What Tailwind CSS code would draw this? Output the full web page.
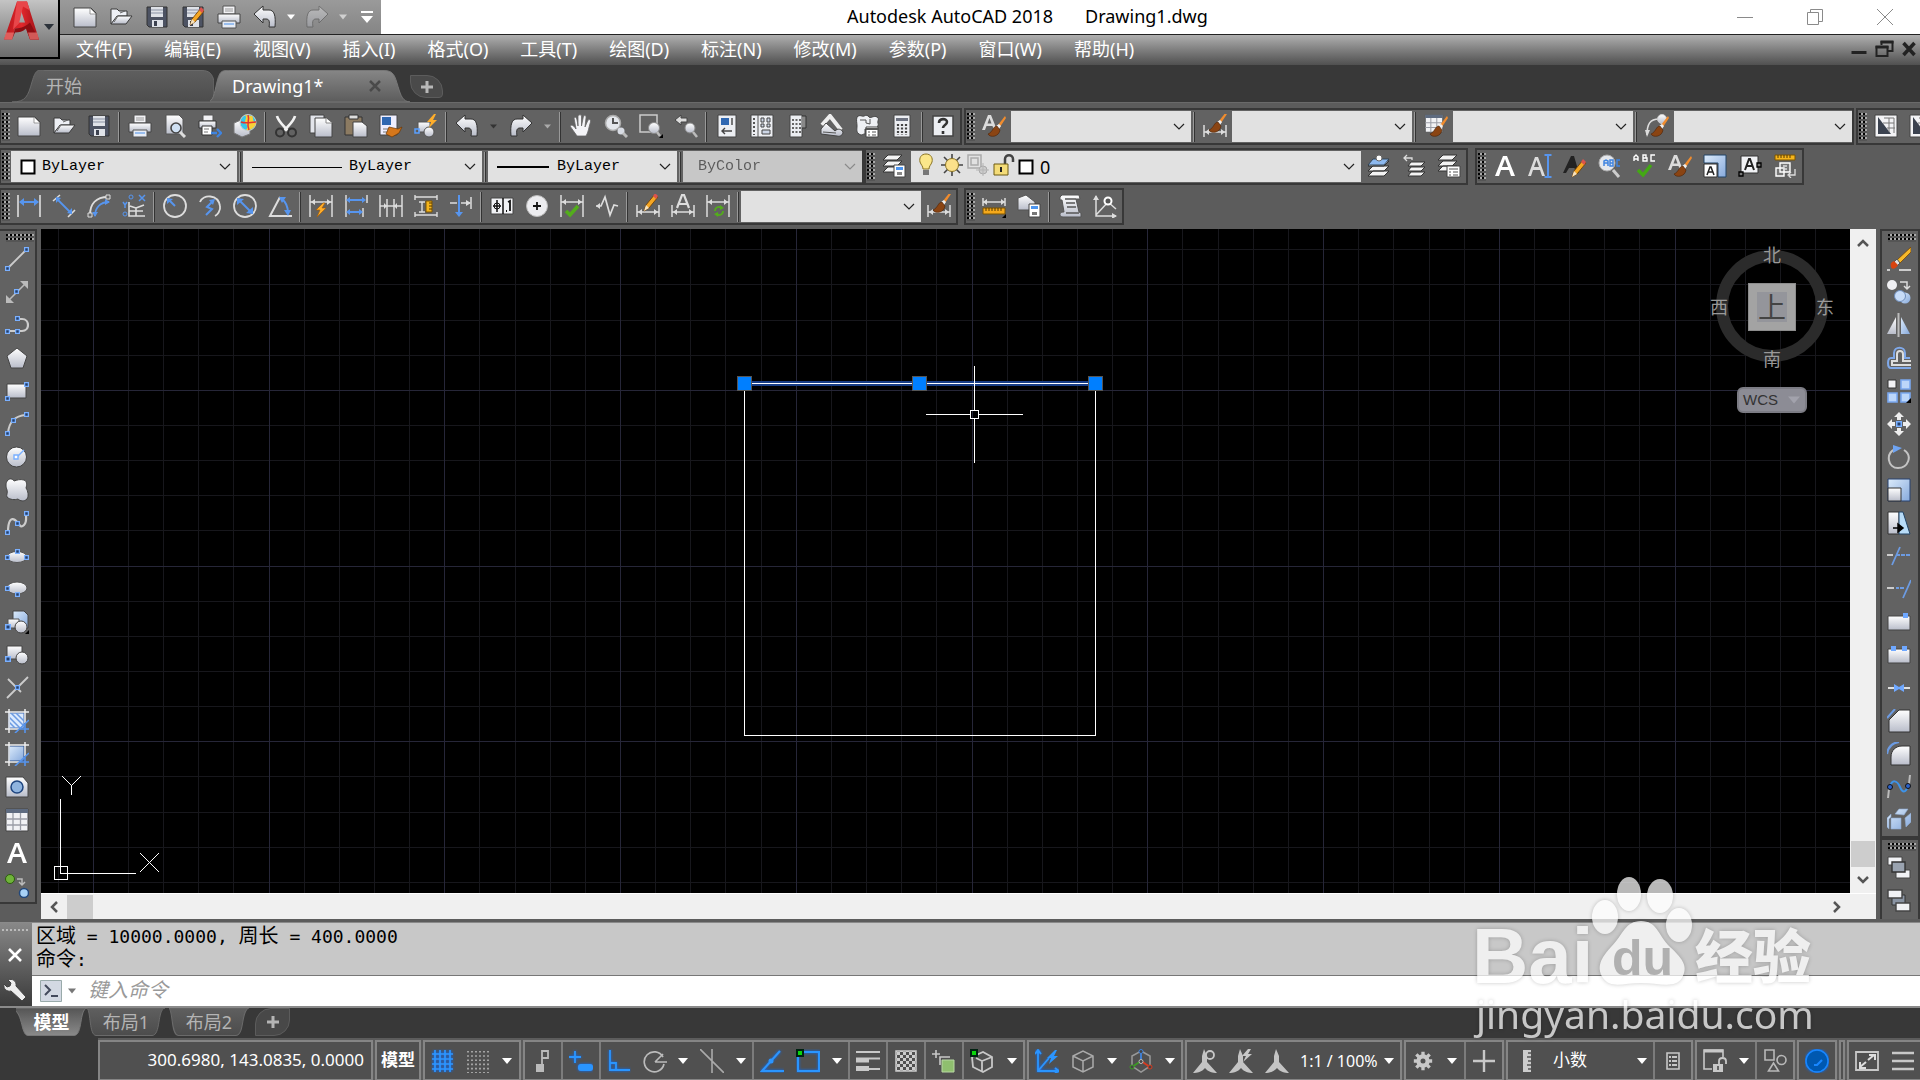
<!DOCTYPE html>
<html lang="zh-CN">
<head>
<meta charset="utf-8">
<title>Autodesk AutoCAD 2018 - Drawing1.dwg</title>
<script src="https://cdn.jsdelivr.net/npm/@tailwindcss/browser@4"></script>
</head>
<body class="relative flex h-screen min-h-[720px] flex-col overflow-hidden bg-[#5c5c5c] font-['Noto_Sans','Noto_Sans_CJK_SC',sans-serif] text-lg text-white">

<!-- Icon library, 24 x 24 -->
<svg class="absolute size-0" aria-hidden="true">
<defs>
<linearGradient id="g" x1="0" y1="0" x2="0" y2="1"><stop offset="0" stop-color="#fff"/><stop offset="1" stop-color="#b9bdca"/></linearGradient>
<linearGradient id="b" x1="0" y1="0" x2="1" y2="1"><stop offset="0" stop-color="#dcebfb"/><stop offset="1" stop-color="#86a9dc"/></linearGradient>
<linearGradient id="r" x1="0" y1="0" x2="1" y2="0"><stop offset="0" stop-color="#b3151b"/><stop offset=".5" stop-color="#e2272c"/><stop offset="1" stop-color="#9c1015"/></linearGradient>
<linearGradient id="t" x1="0" y1="0" x2="0" y2="1"><stop offset="0" stop-color="#5f5f5f"/><stop offset="1" stop-color="#4c4c4c"/></linearGradient>
<linearGradient id="ta" x1="0" y1="0" x2="0" y2="1"><stop offset="0" stop-color="#868686"/><stop offset="1" stop-color="#5c5c5c"/></linearGradient>
<linearGradient id="tb" x1="0" y1="0" x2="0" y2="1"><stop offset="0" stop-color="#555"/><stop offset="1" stop-color="#8a8a8a"/></linearGradient>
<pattern id="dots" width="4" height="4" patternUnits="userSpaceOnUse"><rect width="4" height="4" fill="#555"/><rect width="2" height="2" fill="#000"/><rect x="2" y="0" width="2" height="2" fill="#aaa"/></pattern>
<filter id="glow" x="-40%" y="-40%" width="180%" height="180%"><feDropShadow dx="0" dy="0" stdDeviation="1.4" flood-color="#0a6cff"/></filter>
</defs>
<symbol id="new" viewBox="0 0 24 24"><path d="M1 3h17l5 5v14H1z" fill="url(#g)" stroke="#444"/><path d="M17 3v6h6z" fill="#fff" stroke="#777" stroke-width=".7"/></symbol>
<symbol id="open" viewBox="0 0 24 24"><path d="M2 19V4h6l2 2h8v5H9z" fill="#eef0f5" stroke="#3b3b3b"/><path d="M2 19l6-8h15l-6 8z" fill="url(#g)" stroke="#3b3b3b"/><path d="M11 8l5-2M5 17l4-6" stroke="#666"/></symbol>
<symbol id="save" viewBox="0 0 24 24"><path d="M2 2h20v20H4l-2-2z" fill="#4d5363" stroke="#333"/><path d="M6 2h12v10H6z" fill="#dfe2e8"/><path d="M6 5h12M6 8h12" stroke="#8b93a5"/><path d="M7 15h11v7H7z" fill="#dfe2e8"/><path d="M9 16h3v5H9z" fill="#3d4250"/></symbol>
<symbol id="pencil" viewBox="0 0 24 24"><path d="M9 20l2-6L20 3l3 3-9 11z" fill="#f5a623" stroke="#6b3b00" stroke-width=".8"/><path d="M18 5l2-3 3 3-2 3z" fill="#d9534f"/><path d="M9 20l2-6 3 3z" fill="#f7e3c0"/></symbol>
<symbol id="saveas" viewBox="0 0 24 24"><use href="#save"/><use href="#pencil"/></symbol>
<symbol id="print" viewBox="0 0 24 24"><path d="M6 1h12v8H6z" fill="#f2f2f5" stroke="#555"/><path d="M8 4h8M8 6h8" stroke="#999"/><path d="M1 9h22v9H1z" fill="url(#g)" stroke="#444"/><path d="M5 16h14v7H5z" fill="#e7ecf5" stroke="#555"/><path d="M7 19h10" stroke="#4b8fe8"/></symbol>
<symbol id="preview" viewBox="0 0 24 24"><path d="M3 1h13l4 4v15H3z" fill="url(#g)" stroke="#555"/><circle cx="13" cy="14" r="5" fill="#cfe0f3" stroke="#444" stroke-width="1.6"/><path d="M17 18l5 5" stroke="#ddd" stroke-width="3"/></symbol>
<symbol id="publish" viewBox="0 0 24 24"><path d="M5 1h10v6H5z" fill="#f2f2f5" stroke="#555"/><path d="M1 7h17v7H1z" fill="url(#g)" stroke="#333"/><path d="M4 12h10v9H4z" fill="#fff" stroke="#333"/><path d="M6 15h5M6 18h4" stroke="#777"/><path d="M13 19h6m0-4l4 4-4 4" fill="none" stroke="#3f84e0" stroke-width="2.4"/></symbol>
<symbol id="p3d" viewBox="0 0 24 24"><path d="M1 9l7-3 9 3v11l-8 3-8-4z" fill="url(#g)" stroke="#777"/><circle cx="15" cy="8.500" r="8" fill="#35c7ea" stroke="#ccc"/><path d="M12 1c3 3-2 6 1 9s1 4 0 6c5 1 9-3 10-7-4-1-2-5-4-7z" fill="#f7d038"/><path d="M15 1c2 5-2 9 1 15M8 8c5 2 10 0 15 0" stroke="#e3342f" fill="none" stroke-width="1.500"/></symbol>
<symbol id="cut" viewBox="0 0 24 24"><path d="M3 2c1 5 6 9 11 15M21 2c-1 5-6 9-11 15" stroke="#f2f2f2" stroke-width="2.600" fill="none"/><circle cx="6" cy="18.500" r="4" fill="none" stroke="#333" stroke-width="2"/><circle cx="18" cy="18.500" r="4" fill="none" stroke="#333" stroke-width="2"/></symbol>
<symbol id="copy" viewBox="0 0 24 24"><path d="M1 1h14v18H1z" fill="#e2e4ea" stroke="#444"/><path d="M6 4h11l6 5v14H6z" fill="url(#g)" stroke="#444"/><path d="M17 4v5h6" fill="#fff" stroke="#888"/></symbol>
<symbol id="paste" viewBox="0 0 24 24"><path d="M1 3h17v18H1z" fill="#8c7b62" stroke="#333"/><path d="M5 1h9v4H5z" fill="#ddd" stroke="#333"/><path d="M9 8h9l5 4v11H9z" fill="url(#g)" stroke="#444"/></symbol>
<symbol id="brush" viewBox="0 0 24 24"><path d="M23 2l-7 9 2 2 6-9z" fill="#f08c2e"/><path d="M17 10l-3 2 3 3 2-3z" fill="#eee"/><path d="M15 12c-4 0-4 6-9 8 2 4 11 3 12-4z" fill="#8a4413" stroke="#4c2409" stroke-width=".6"/></symbol>
<symbol id="match" viewBox="0 0 24 24"><path d="M1 1h17v20H1z" fill="#eef" stroke="#444"/><path d="M3 3h9v8H3z" fill="#2f67b1"/><path d="M4 15h7M4 18h7" stroke="#777"/><path d="M10 13l9 2 4-2-3 6-7 4-6-3z" fill="#d5771c" stroke="#6b3500" stroke-width=".7"/></symbol>
<symbol id="block" viewBox="0 0 24 24"><path d="M4 8h12v10H4z" fill="url(#g)" stroke="#555"/><circle cx="15" cy="18" r="5" fill="url(#g)" stroke="#555"/><path d="M1 15h4v4H1z" fill="none" stroke="#5aa0ff" stroke-width="1.500"/><path d="M20 0l-7 8h4l-2 6 8-8h-4l3-6z" fill="#ffae2b"/></symbol>
<symbol id="undo" viewBox="0 0 24 24"><path d="M1 9l9-8v4h6c5 0 7 5 6 17h-6c1-6 0-8-3-8h-3v4z" fill="url(#g)" stroke="#333"/></symbol>
<symbol id="redo" viewBox="0 0 24 24"><path d="M23 9l-9-8v4H8c-5 0-7 5-6 17h6c-1-6 0-8 3-8h3v4z" fill="url(#g)" stroke="#333"/></symbol>
<symbol id="pan" viewBox="0 0 24 24"><path d="M8 22c-2-3-5-7-7-10 2-2 4 0 6 3L5 4c2-2 3 0 4 8V2c2-2 3-1 3.500 0v10l2-10c2-1 3 0 2.500 2l-1 9 3-7c2-1 3 0 2.500 2-2 6-2 10-4.500 14z" fill="#f4f4f7" stroke="#666" stroke-width=".8"/></symbol>
<symbol id="zoomt" viewBox="0 0 24 24"><circle cx="9" cy="9" r="7.500" fill="#e4e7ec" stroke="#aaa" stroke-width="1.500"/><path d="M9 4v5h5" stroke="#555" stroke-width="2" fill="none"/><circle cx="17" cy="17" r="3.500" fill="#d8dce4"/><path d="M19 19l4 4" stroke="#bbb" stroke-width="3"/></symbol>
<symbol id="zoomw" viewBox="0 0 24 24"><path d="M1 1h17v17H1z" fill="none" stroke="#ccc" stroke-width="1.500"/><circle cx="15" cy="14" r="5.500" fill="url(#g)" stroke="#888"/><path d="M18 18l3 4" stroke="#bbb" stroke-width="2.500"/><path d="M24 20v4h-4z" fill="#000"/></symbol>
<symbol id="zoomp" viewBox="0 0 24 24"><path d="M1 6l6-5v3h6v4H7v3z" fill="#ddd" stroke="#444"/><circle cx="16" cy="14" r="5" fill="url(#g)" stroke="#888"/><path d="M19 18l4 5" stroke="#bbb" stroke-width="2.500"/></symbol>
<symbol id="props" viewBox="0 0 24 24"><path d="M3 1h18v22H3z" fill="#eceef2" stroke="#444"/><path d="M6 4h8v7H6z" fill="#2f67b1"/><path d="M17 4v7M7 17h10M10 14l-3 3 3 3" stroke="#444" stroke-width="1.400" fill="none"/></symbol>
<symbol id="dc" viewBox="0 0 24 24"><path d="M1 1h22v22H1z" fill="#eceef2" stroke="#444"/><path d="M8 1v22" stroke="#555"/><path d="M4 4v17" stroke="#555" stroke-width="2" stroke-dasharray="2 2"/><path d="M11 4h3v4h-3zM17 4h3v4h-3zM11 10h3v3h-3zM17 10h3v3h-3zM12 16h8v4h-8z" fill="#cdd6e6" stroke="#444"/></symbol>
<symbol id="tp" viewBox="0 0 24 24"><path d="M5 1h12v22H5z" fill="#eceef2" stroke="#444"/><path d="M17 2h4v12h-4" fill="#888" stroke="#333"/><path d="M8 5v16M11.500 5v16M15 5v16" stroke="#666" stroke-width="2" stroke-dasharray="2 2"/></symbol>
<symbol id="ssm" viewBox="0 0 24 24"><path d="M2 11l8-9 11 14" fill="none" stroke="#eee" stroke-width="4"/><path d="M1 15l5-6 9 8c3-3 6-2 8 1 0 3-3 5-6 4L1 20z" fill="url(#g)" stroke="#444"/><path d="M3 18l13 1" stroke="#555"/></symbol>
<symbol id="markup" viewBox="0 0 24 24"><path d="M2 3c3-3 5 0 7-1s4-1 5 1 5-2 8 0 0 4 1 6-1 4-1 6H10v5c-3 0-3 2-6 0s-2-5-2-8-1-6 0-9z" fill="#eef0f4" stroke="#444"/><path d="M5 6h6v3l4 1v-5" stroke="#555" fill="none"/><path d="M11 13h12v10H11z" fill="#fff" stroke="#444"/><path d="M11 15h12" stroke="#555" stroke-width="2"/><path d="M13 18h2m2 0h4m-8 3h2m2 0h4" stroke="#555"/></symbol>
<symbol id="calc" viewBox="0 0 24 24"><path d="M4 1h16v22H4z" fill="#eceef2" stroke="#444"/><path d="M6 4h12v3H6z" fill="#6d7280"/><path d="M8 10v11M12 10v11M16 10v11" stroke="#444" stroke-width="2.200" stroke-dasharray="2 1.500"/></symbol>
<symbol id="help" viewBox="0 0 24 24"><path d="M2 2h20v20H2z" fill="#eceef2" stroke="#444" stroke-width="1.500"/><path d="M8 9c0-5 8-5 8-1 0 3-4 3-4 6M12 17v3" stroke="#333" stroke-width="2.600" fill="none"/></symbol>
<symbol id="A" viewBox="0 0 24 24"><path d="M2 22L10 2h4l8 20h-4l-2-6H8l-2 6zM9 13h6l-3-8z" fill="#fff"/></symbol>
<symbol id="As" viewBox="0 0 24 24"><path d="M0 16L6 1h3l6 15h-3l-1.500-4h-6L3 16zM5.500 9.500h4l-2-5.500z" fill="#dcdcdc"/></symbol>
<symbol id="tstyle" viewBox="0 0 24 24"><use href="#As"/><use href="#brush"/></symbol>
<symbol id="dim" viewBox="0 0 24 24"><path d="M1 1v22M23 1v22M1 8h22" stroke="#ddd" stroke-width="1.500" fill="none"/><path d="M2 8l4-3v6zM22 8l-4-3v6z" fill="#ddd"/></symbol>
<symbol id="dimlow" viewBox="0 0 24 24"><path d="M1 11v12M23 11v12M1 18h22" stroke="#ddd" stroke-width="1.500" fill="none"/><path d="M2 18l4-3v6zM22 18l-4-3v6z" fill="#ddd"/></symbol>
<symbol id="dstyle" viewBox="0 0 24 24"><use href="#dimlow"/><use href="#brush" y="-4"/></symbol>
<symbol id="table" viewBox="0 0 24 24"><path d="M1 1h22v22H1z" fill="#f1f2f5" stroke="#444"/><path d="M1 1h22v4H1z" fill="#5e6b80"/><path d="M1 11h22M1 17h22M8 5v18M15.500 5v18" stroke="#9a9da6" stroke-width="1.300"/></symbol>
<symbol id="tbstyle" viewBox="0 0 24 24"><svg width="20" height="19" viewBox="0 0 24 24"><use href="#table"/></svg><use href="#brush"/></symbol>
<symbol id="mlstyle" viewBox="0 0 24 24"><path d="M2 21C2 10 5 5 14 5" stroke="#ddd" stroke-width="1.600" fill="none"/><path d="M0 16l5 0-3 7z" fill="#ddd"/><circle cx="17" cy="5" r="4.500" fill="url(#g)" stroke="#ccc"/><use href="#brush"/></symbol>
<symbol id="vp" viewBox="0 0 24 24"><path d="M1 1h22v22H1z" fill="#f3f3f5" stroke="#444"/><path d="M4 3v17h13z" fill="#3b424f"/><path d="M10 4h10v15M15 4v14M9 9h11M13 14h8" stroke="#777" fill="none"/></symbol>
<symbol id="layers" viewBox="0 0 24 24"><path d="M6 7h16l-5 5H1zM6 12h16l-5 5H1zM6 17h16l-5 5H1z" fill="#f3f3f3" stroke="#333"/></symbol>
<symbol id="lprop" viewBox="0 0 24 24"><path d="M6 1h14l-5 5H1zM6 7h14l-5 5H1zM6 13h14l-5 5H1z" fill="#f3f3f3" stroke="#333"/><path d="M12 11h11v12H12z" fill="#fff" stroke="#444"/><path d="M14 13h7v3h-7z" fill="#4d96f0"/><path d="M15 18h5v3h-5z" fill="#888"/></symbol>
<symbol id="lcur" viewBox="0 0 24 24"><use href="#layers"/><path d="M6 5h16l-5 6H1z" fill="#8db9ef" stroke="#345"/><circle cx="12" cy="4" r="3" fill="#fff" stroke="#666"/></symbol>
<symbol id="lprev" viewBox="0 0 24 24"><path d="M9 8h14l-4 4H6zM9 13h14l-4 4H6zM9 18h14l-4 4H6z" fill="#f3f3f3" stroke="#333"/><path d="M10 6V4H2M5 1L2 4l3 3" stroke="#ddd" fill="none" stroke-width="1.300"/></symbol>
<symbol id="lstate" viewBox="0 0 24 24"><path d="M6 1h14l-5 5H1zM6 7h14l-5 5H1zM6 12h14l-5 5H1z" fill="#f3f3f3" stroke="#333"/><path d="M10 12h13v11H10z" fill="#fff" stroke="#444"/><path d="M12 15h9M12 18h2m2 0h5m-9 3h2m2 0h5" stroke="#555"/></symbol>
<symbol id="bulb" viewBox="0 0 24 24"><path d="M12 1c-5 0-7 4-6 8 1 3 3 4 3 7h6c0-3 2-4 3-7 1-4-1-8-6-8z" fill="#fbe78a" stroke="#8a7424"/><path d="M9 17h6v5H9z" fill="#777"/></symbol>
<symbol id="sun" viewBox="0 0 24 24"><path d="M12 1v22M1 12h22M4 4l16 16M20 4L4 20" stroke="#444" stroke-width="1.600"/><circle cx="12" cy="12" r="6.500" fill="#fbe08a" stroke="#8a7424"/></symbol>
<symbol id="frz" viewBox="0 0 24 24"><path d="M2 2h13v13H2zM5 5h7v7H5z" fill="none" stroke="#aaa" stroke-width="1.500"/><circle cx="17" cy="17" r="4" fill="#ccc" stroke="#aaa"/><path d="M17 10v13M10 17h13" stroke="#b5b5b5"/></symbol>
<symbol id="lock" viewBox="0 0 24 24"><path d="M13 11V6c0-5 8-5 8 0v3" stroke="#444" stroke-width="2.500" fill="none"/><path d="M2 11h14v11H2z" fill="#f4dc78" stroke="#6c5a13"/><path d="M9 14v5" stroke="#222" stroke-width="2"/></symbol>
<symbol id="txt1" viewBox="0 0 24 24"><path d="M0 22L7 3h3l7 19h-3l-2-6H5l-2 6zM6 13h5L8.500 6z" fill="#dcdcdc"/><path d="M20 2v20M16.500 1h7M16.500 23h7" stroke="#5795ee" stroke-width="2"/></symbol>
<symbol id="txt2" viewBox="0 0 24 24"><path d="M0 19L8 2h3l5 17h-3l-1.500-5H6l-3 5z" fill="#222"/><use href="#pencil" y="3"/></symbol>
<symbol id="find" viewBox="0 0 24 24"><circle cx="9" cy="9" r="8" fill="#e4e7ec" stroke="#aaa"/><path d="M15 16l6 7" stroke="#ccc" stroke-width="3"/><path d="M6 12V7l2-1 2 1v5m0-3H6m6-3v6h3V9h-3 3V6zm10 0h-3v6h3" stroke="#3f84e0" stroke-width="1.500" fill="none"/></symbol>
<symbol id="spell" viewBox="0 0 24 24"><path d="M1 7V3l2-2 2 2v4M1 5h4M10 1v6h4V4h-4 3V1zM22 1h-4v6h4" stroke="#fff" stroke-width="1.400" fill="none"/><path d="M5 16l5 5 8-10" stroke="#43a814" stroke-width="3.500" fill="none"/></symbol>
<symbol id="tscale" viewBox="0 0 24 24"><path d="M1 1h22v22h-8V9H1z" fill="url(#b)" stroke="#246"/><path d="M1 10h13v13H1z" fill="#fff" stroke="#333"/><path d="M4 21l3-8h1l3 8M5 18h5" stroke="#222" stroke-width="1.500" fill="none"/></symbol>
<symbol id="tjust" viewBox="0 0 24 24"><path d="M3 2h17v17H3z" fill="#f0f1f4" stroke="#333"/><path d="M7 16l4-11h1l4 11M8 12h7" stroke="#222" stroke-width="2" fill="none"/><path d="M1 18h4v4H1zM19 9h4v4h-4z" fill="#777" stroke="#000" stroke-width="1.300"/></symbol>
<symbol id="tspace" viewBox="0 0 24 24"><path d="M2 1h20v5H2z" fill="#f5b51c" stroke="#7d5500"/><path d="M5 1v3m3-3v3m3-3v3m3-3v3m3-3v3" stroke="#543800"/><path d="M3 14h8v8H3zM7 9h10v9H7z" fill="#777" stroke="#fff" stroke-width="1.400"/><path d="M10 12h4m-4 3h4M22 15v6h-6m2-3l-3 3 3 3" stroke="#ddd" fill="none" stroke-width="1.300"/></symbol>
<!-- dimensions -->
<symbol id="d1" viewBox="0 0 24 24"><path d="M1 1v22M23 1v22" stroke="#e6e6e6" stroke-width="1.500"/><path d="M3 8h18" stroke="#5795ee" stroke-width="2"/><path d="M2 8l5-4v8zM22 8l-5-4v8z" fill="#5795ee"/></symbol>
<symbol id="d2" viewBox="0 0 24 24"><path d="M1 7L8 1M16 23l7-7" stroke="#ddd" stroke-width="1.600"/><path d="M5 5l14 14" stroke="#5795ee" stroke-width="1.800"/><path d="M4 3v6l5-5zM20 20v-6l-5 5z" fill="#5795ee"/></symbol>
<symbol id="d3" viewBox="0 0 24 24"><path d="M3 21C3 10 9 3 21 3" stroke="#ddd" stroke-width="2" fill="none"/><path d="M8 22C8 14 13 8 22 8" stroke="#5795ee" stroke-width="1.800" fill="none"/><path d="M23 8l-5-3v6zM8 23l-3-5h6z" fill="#5795ee"/><path d="M1 19h4v4H1zM19 1h4v4h-4z" fill="#666" stroke="#ddd"/></symbol>
<symbol id="d4" viewBox="0 0 24 24"><path d="M7 8v14h16M7 17h14M14 22v-8l-6-2M14 14l8-3" stroke="#ddd" stroke-width="1.600" fill="none"/><circle cx="9" cy="3" r="2" fill="none" stroke="#5795ee"/><path d="M17 1l6 6M23 1l-6 6M1 8l2 3 2-3M3 11v3" stroke="#5795ee" stroke-width="1.500" fill="none"/><circle cx="3" cy="20" r="2" fill="none" stroke="#5795ee"/></symbol>
<symbol id="d5" viewBox="0 0 24 24"><circle cx="12" cy="12" r="11" fill="none" stroke="#ddd" stroke-width="1.800"/><path d="M12 12L6 6" stroke="#5795ee" stroke-width="2"/><path d="M4 4v6l6-5z" fill="#5795ee"/></symbol>
<symbol id="d6" viewBox="0 0 24 24"><path d="M2 8c3-8 18-8 20 4 1 5-3 9-5 10" fill="none" stroke="#ddd" stroke-width="1.800"/><path d="M8 21l6-6-5-2 5-5" stroke="#5795ee" stroke-width="2" fill="none"/><path d="M11 6l6-1-2 6z" fill="#5795ee"/></symbol>
<symbol id="d7" viewBox="0 0 24 24"><circle cx="12" cy="12" r="11" fill="none" stroke="#ddd" stroke-width="1.800"/><path d="M7 7l10 10" stroke="#5795ee" stroke-width="2"/><path d="M4 4v7l7-6zM20 20v-7l-7 6z" fill="#5795ee"/></symbol>
<symbol id="d8" viewBox="0 0 24 24"><path d="M12 3L2 22h22" fill="none" stroke="#ddd" stroke-width="2"/><path d="M14 5c5 4 6 9 6 14" stroke="#5795ee" stroke-width="2" fill="none"/><path d="M11 3h7l-4 6zM20 22l-4-6h7z" fill="#5795ee"/></symbol>
<symbol id="bolt" viewBox="0 0 24 24"><path d="M14 8l-7 7h4l-3 7 9-9h-4l3-5z" fill="#ffae2b" stroke="#a85b00" stroke-width=".6"/></symbol>
<symbol id="d9" viewBox="0 0 24 24"><use href="#dim"/><use href="#bolt" y="1"/></symbol>
<symbol id="d10" viewBox="0 0 24 24"><path d="M2 1v22" stroke="#ddd" stroke-width="1.500"/><path d="M23 1v8M19 14v9" stroke="#ddd" stroke-width="1.500"/><path d="M4 6h16M4 18h13" stroke="#5795ee" stroke-width="1.800"/><path d="M2 6l4-3v6zM22 6l-4-3v6zM2 18l4-3v6zM19 18l-4-3v6z" fill="#5795ee"/></symbol>
<symbol id="d11" viewBox="0 0 24 24"><path d="M1 1v22M8 5v18M15 5v18M23 1v22M1 12h22" stroke="#ddd" stroke-width="1.500"/><path d="M8 12l-3-3v6zM15 12l3-3v6z" fill="#ddd"/></symbol>
<symbol id="d12" viewBox="0 0 24 24"><path d="M1 1v5M23 1v5M1 3h22M1 18v5M23 18v5M1 21h22M5 8h6M8 8v10M5 18h6" stroke="#ddd" stroke-width="1.400"/><path d="M12 7h6v11h-6z" fill="#f5b51c" stroke="#7d5500"/><path d="M15 9h3m-3 3h3m-3 3h3" stroke="#543800"/></symbol>
<symbol id="d13" viewBox="0 0 24 24"><path d="M10 1v19" stroke="#5795ee" stroke-width="2"/><path d="M10 23l-4-5h8z" fill="#5795ee"/><path d="M1 9h7M12 9h9M22 3v12" stroke="#ddd" stroke-width="1.500"/><path d="M22 9l-5-3v6z" fill="#ddd"/></symbol>
<symbol id="d14" viewBox="0 0 24 24"><path d="M1 4h22v16H1z" fill="#f1f2f5" stroke="#444"/><path d="M13 4v16M3 12h8M7 6v12" stroke="#111" stroke-width="1.500"/><circle cx="7" cy="12" r="3" fill="none" stroke="#111"/><path d="M16 17h1M18 8l2-1v10" stroke="#111" stroke-width="1.800" fill="none"/></symbol>
<symbol id="d15" viewBox="0 0 24 24"><circle cx="12" cy="12" r="10.500" fill="#ececef" stroke="#bbb"/><path d="M12 8v8M8 12h8" stroke="#111" stroke-width="1.800"/></symbol>
<symbol id="d16" viewBox="0 0 24 24"><use href="#dim"/><path d="M6 17l4 4 8-9" stroke="#53ad1b" stroke-width="3.500" fill="none"/></symbol>
<symbol id="d17" viewBox="0 0 24 24"><path d="M1 12h5l4-9 5 18 4-10 4 1" stroke="#ddd" stroke-width="1.700" fill="none"/><path d="M1 12l4-3v6z" fill="#ddd"/></symbol>
<symbol id="d18" viewBox="0 0 24 24"><use href="#dimlow"/><use href="#pencil" y="-3" x="-1"/></symbol>
<symbol id="d19" viewBox="0 0 24 24"><use href="#dimlow"/><path d="M6 14l5-13h2l5 13M8 10h8" stroke="#ddd" stroke-width="2.200" fill="none"/></symbol>
<symbol id="d20" viewBox="0 0 24 24"><use href="#dim"/><path d="M9 17c0-4 4-5 6-3M17 17c0 4-4 5-6 3" stroke="#53ad1b" stroke-width="1.800" fill="none"/><path d="M14 11l4 3-4 2zM12 23l-4-3 4-2z" fill="#53ad1b"/></symbol>
<symbol id="m1" viewBox="0 0 24 24"><path d="M1 4v8M23 4v8M1 8h22" stroke="#ddd" stroke-width="1.500"/><path d="M1 8l4-3v6zM23 8l-4-3v6z" fill="#ddd"/><path d="M24 20v4h-4z"/><path d="M1 14h22v6H1z" fill="#f5a91c" stroke="#7d5500"/><path d="M4 14v3m3-3v3m3-3v3m3-3v3m3-3v3m3-3v3" stroke="#543800"/></symbol>
<symbol id="m2" viewBox="0 0 24 24"><path d="M1 4l8-3 9 7v8H1z" fill="url(#g)" stroke="#555"/><path d="M12 10h11v13H12z" fill="#fff" stroke="#444"/><path d="M14 12h7v3h-7z" fill="#4d96f0"/><path d="M15 18h5v3h-5z" fill="#777"/></symbol>
<symbol id="m3" viewBox="0 0 24 24"><path d="M4 1h17l1 4h-4l3 13 2 1v4H5c-4 0-4-5 0-5h1L4 6H2V3z" fill="url(#g)" stroke="#555"/><path d="M7 5h11M8 9h9M9 13h9M8 19h13" stroke="#555" stroke-width="1.500"/></symbol>
<symbol id="m4" viewBox="0 0 24 24"><path d="M3 2v20h20M3 21L15 8l8 7" stroke="#ddd" stroke-width="1.500" fill="none"/><path d="M3 1l3 5H0zM24 22l-5-3v6z" fill="#ddd"/><circle cx="15" cy="7" r="3.500" fill="#555" stroke="#fff" stroke-width="2"/></symbol>
<!-- draw -->
<symbol id="sq" viewBox="0 0 4 4"><path d="M.5.5h3v3h-3z" fill="#24406e" stroke="#7ab0ff"/></symbol>
<symbol id="w1" viewBox="0 0 24 24"><path d="M3 21L21 3" stroke="#ccc" stroke-width="1.800"/><use href="#sq" x="0" y="19" width="5" height="5"/><use href="#sq" x="19" y="0" width="5" height="5"/></symbol>
<symbol id="w2" viewBox="0 0 24 24"><path d="M4 20L20 4" stroke="#bbb" stroke-width="1.600"/><path d="M23 1v8l-8-8zM1 23v-8l8 8z" fill="#bbb"/><use href="#sq" x="9" y="9" width="5" height="5"/></symbol>
<symbol id="w3" viewBox="0 0 24 24"><path d="M12 6h5c8 0 8 12 0 12H3" stroke="#ccc" stroke-width="2.200" fill="none"/><use href="#sq" x="0" y="16" width="5" height="5"/><use href="#sq" x="10" y="16" width="5" height="5"/><use href="#sq" x="10" y="3" width="5" height="5"/></symbol>
<symbol id="w4" viewBox="0 0 24 24"><path d="M12 2l10 8-4 12H6L2 10z" fill="url(#g)" stroke="#444"/></symbol>
<symbol id="w5" viewBox="0 0 24 24"><path d="M2 5h19v14H2z" fill="url(#g)" stroke="#444"/><use href="#sq" x="0" y="17" width="5" height="5"/><use href="#sq" x="19" y="3" width="5" height="5"/></symbol>
<symbol id="w6" viewBox="0 0 24 24"><path d="M3 21C4 10 9 4 21 3" stroke="#ccc" stroke-width="2" fill="none"/><use href="#sq" x="0" y="19" width="5" height="5"/><use href="#sq" x="6" y="6" width="5" height="5"/><use href="#sq" x="19" y="0" width="5" height="5"/></symbol>
<symbol id="w7" viewBox="0 0 24 24"><circle cx="11.500" cy="12" r="10" fill="url(#g)" stroke="#444"/><path d="M12 12l7-7" stroke="#7ab0ff" stroke-width="1.500"/><path d="M9 10h4v4H9z" fill="#fff" stroke="#7ab0ff" stroke-width="1.400"/></symbol>
<symbol id="w8" viewBox="0 0 24 24"><path d="M3 2c2-2 5-1 6 1 3-1 6-2 10-1 3 1 3 5 2 8 2 3 3 8 1 11-3 3-7 2-9 0-3 1-8 1-11-2-1-2 1-4 0-7S0 5 3 2z" fill="url(#g)" stroke="#444"/></symbol>
<symbol id="w9" viewBox="0 0 24 24"><path d="M3 21C3 10 6 6 10 9s5 9 9 5c3-3 2-6 2-11" stroke="#ccc" stroke-width="2.200" fill="none"/><use href="#sq" x="0" y="19" width="5" height="5"/><use href="#sq" x="10" y="10" width="5" height="5"/><use href="#sq" x="19" y="0" width="5" height="5"/></symbol>
<symbol id="w10" viewBox="0 0 24 24"><ellipse cx="12" cy="13" rx="10" ry="5.500" fill="url(#g)" stroke="#555"/><use href="#sq" x="0" y="11" width="5" height="5"/><use href="#sq" x="10" y="5" width="5" height="5"/><use href="#sq" x="19" y="11" width="5" height="5"/></symbol>
<symbol id="w11" viewBox="0 0 24 24"><ellipse cx="12" cy="11" rx="10" ry="6" fill="url(#g)" stroke="#555"/><use href="#sq" x="0" y="9" width="5" height="5"/><use href="#sq" x="10" y="15" width="5" height="5"/></symbol>
<symbol id="w12" viewBox="0 0 24 24"><path d="M8 1h11l4 4v13H8z" fill="url(#b)" stroke="#444"/><path d="M3 9h11v9H3z" fill="url(#g)" stroke="#555"/><circle cx="16" cy="17" r="6" fill="url(#g)" stroke="#444"/><path d="M24 20v4h-4z" fill="#000"/><use href="#sq" x="0" y="14" width="6" height="6"/></symbol>
<symbol id="w13" viewBox="0 0 24 24"><path d="M2 3h15v13H2z" fill="url(#g)" stroke="#444"/><circle cx="17" cy="15" r="6" fill="url(#g)" stroke="#444"/><use href="#sq" x="0" y="13" width="6" height="6"/></symbol>
<symbol id="w14" viewBox="0 0 24 24"><path d="M2 22L23 1M3 3l13 13" stroke="#ccc" stroke-width="1.800"/><use href="#sq" x="10" y="9" width="5" height="5"/></symbol>
<symbol id="w15" viewBox="0 0 24 24"><path d="M4 4h15v15H4z" fill="#dceafd" stroke="#3f6db8"/><path d="M4 13l6 6M4 8l11 11M6 4l13 13M11 4l8 8" stroke="#6c9be2" stroke-width="1.500"/><path d="M0 3h24M0 20h14M4 0v24M20 0v14" stroke="#eee" stroke-width="1.500"/><path d="M10 24L24 11M15 20h9M20 15v9" stroke="#5795ee" stroke-width="1.600"/></symbol>
<symbol id="w16" viewBox="0 0 24 24"><path d="M4 4h15v15H4z" fill="url(#b)" stroke="#2b4f8c"/><path d="M0 3h24M0 20h14M4 0v24M20 0v14" stroke="#eee" stroke-width="1.500"/><path d="M10 24L24 11M15 20h9M20 15v9" stroke="#5795ee" stroke-width="1.600"/></symbol>
<symbol id="w17" viewBox="0 0 24 24"><path d="M1 2h17l5 6v14H1z" fill="url(#g)" stroke="#444"/><circle cx="12" cy="12" r="6" fill="#8fb4df" stroke="#1f4680" stroke-width="1.500"/></symbol>
<symbol id="w18" viewBox="0 0 24 24"><circle cx="5" cy="5" r="4.500" fill="#6fb33a" stroke="#2c5c0d"/><path d="M12 5h5v5m-3-2l3 3 3-3" stroke="#bbb" stroke-width="1.500" fill="none"/><circle cx="19" cy="19" r="4.500" fill="#a8d2f7" stroke="#22487c" stroke-width="1.500"/></symbol>
<!-- modify -->
<symbol id="e1" viewBox="0 0 24 24"><path d="M24 0v5L13 16l-3-3z" fill="#f6b92b" stroke="#6b3b00" stroke-width=".7"/><path d="M10 12l3 4-3 3-4-3z" fill="#ddd" stroke="#555"/><path d="M7 14l4 4c-2 4-6 5-7 2s0-5 3-6z" fill="#d8430f"/><path d="M0 23h3M12 23h12" stroke="#ccc" stroke-width="2"/></symbol>
<symbol id="e2" viewBox="0 0 24 24"><circle cx="5" cy="5" r="5" fill="#f0f0f3"/><circle cx="18" cy="18" r="5.500" fill="url(#b)"/><circle cx="13" cy="16" r="5.500" fill="#c7dcf8" stroke="#6d8cba"/><path d="M13 2h7v6m-3-2l3 3 3-3" stroke="#ddd" stroke-width="1.500" fill="none"/></symbol>
<symbol id="e3" viewBox="0 0 24 24"><path d="M9 4v17H0z" fill="url(#g)"/><path d="M14 4v17h9z" fill="url(#b)"/><path d="M11.500 0v24" stroke="#bbb" stroke-width="2"/></symbol>
<symbol id="e4" viewBox="0 0 24 24"><path d="M23 12h-5V7c0-7-11-7-11 0v5H4c-4 0-4 10 0 10h20" stroke="#7fa8e8" stroke-width="2" fill="none"/><path d="M24 15h-8V8c0-4-6-4-6 0v7H5v4h19" stroke="#ddd" stroke-width="2" fill="none"/></symbol>
<symbol id="e5" viewBox="0 0 24 24"><path d="M1 1h8v8H1z" fill="#f1f1f4" stroke="#333"/><path d="M14 1h9v9h-9zM1 14h9v9H1zM14 14h9v9h-9z" fill="#bcd6fa" stroke="#7aa8f0" stroke-width="1.600"/><path d="M24 19v5h-5z" fill="#000"/></symbol>
<symbol id="e6" viewBox="0 0 24 24"><path d="M12 0l5 5h-3v3h-4V5H7zM12 24l5-5h-3v-3h-4v3H7zM0 12l5-5v3h3v4H5v3zM24 12l-5-5v3h-3v4h3v3z" fill="#eee"/><use href="#sq" x="9" y="9" width="6" height="6"/></symbol>
<symbol id="e7" viewBox="0 0 24 24"><path d="M8 4C-2 9 1 23 11 23s15-12 6-18" stroke="#c4c4c4" stroke-width="2" fill="none"/><path d="M6 0l9 3-9 5z" fill="#6fa4f2"/></symbol>
<symbol id="e8" viewBox="0 0 24 24"><path d="M1 1h22v22H1z" fill="url(#b)" stroke="#27406e"/><path d="M1 10h13v13H1z" fill="url(#g)" stroke="#333"/></symbol>
<symbol id="e9" viewBox="0 0 24 24"><path d="M1 1h11v22H1z" fill="url(#g)" stroke="#333"/><path d="M12 1h4l7 22H12z" fill="#b8dcf8" stroke="#246"/><path d="M6 17h8m-3-4l5 4-5 4z" stroke="#000" stroke-width="1.500"/></symbol>
<symbol id="e10" viewBox="0 0 24 24"><path d="M0 11h6" stroke="#ccc" stroke-width="2"/><path d="M13 3L5 21M10 11h3m1 0h4m1 0h4" stroke="#6c9be2" stroke-width="1.800"/></symbol>
<symbol id="e11" viewBox="0 0 24 24"><path d="M0 11h7" stroke="#ccc" stroke-width="2"/><path d="M24 3l-8 18M9 11h3m1 0h4" stroke="#6c9be2" stroke-width="1.800"/></symbol>
<symbol id="e12" viewBox="0 0 24 24"><path d="M1 6h22v14H1z" fill="url(#g)" stroke="#444"/><path d="M16 3h5v5h-5z" fill="#6fa8ff"/></symbol>
<symbol id="e13" viewBox="0 0 24 24"><path d="M1 6h22v14H1z" fill="url(#g)" stroke="#444"/><path d="M4 3h5v5H4zM15 3h5v5h-5z" fill="#6fa8ff"/></symbol>
<symbol id="e14" viewBox="0 0 24 24"><path d="M1 12h22" stroke="#eee" stroke-width="1.800"/><path d="M7 8l5 3 5-3v8l-5-3-5 3z" fill="#6fa8ff"/></symbol>
<symbol id="e15" viewBox="0 0 24 24"><path d="M2 11L12 1h11v22H2z" fill="url(#g)" stroke="#333"/><path d="M0 9l8-9" stroke="#6c9be2" stroke-width="2"/></symbol>
<symbol id="e16" viewBox="0 0 24 24"><path d="M4 23v-8c0-7 5-11 11-11h8v19z" fill="url(#g)" stroke="#333"/><path d="M0 12C1 5 5 1 12 0" stroke="#6c9be2" stroke-width="2.200" fill="none"/></symbol>
<symbol id="e17" viewBox="0 0 24 24"><path d="M1 23l1-9M22 9l1-9" stroke="#bbb" stroke-width="2"/><path d="M3 12c2-8 7-7 10 0s6 5 8-1" stroke="#3e93e8" stroke-width="2" fill="none"/><circle cx="3" cy="12" r="2.500" fill="#2c62c9" stroke="#111"/><circle cx="21" cy="11" r="2.500" fill="#2c62c9" stroke="#111"/></symbol>
<symbol id="e18" viewBox="0 0 24 24"><path d="M4 10h10v11H4zM8 6l4-5h9l-4 6zM18 10l6-5v9l-5 5zM0 10l4-4v3l-2 2v10l-2-2z" fill="url(#b)" stroke="#8fa9cc" stroke-width=".6"/></symbol>
<symbol id="e19" viewBox="0 0 24 24"><path d="M1 1h14v8H1zM9 14h14v8H9z" fill="#f1f2f5" stroke="#444"/><path d="M5 6h13v10H5z" fill="#9aa3b0" stroke="#333" stroke-width="1.400"/></symbol>
<symbol id="e20" viewBox="0 0 24 24"><path d="M5 6h13v10H5z" fill="#8a94a3" stroke="#333"/><path d="M1 1h14v8H1zM9 14h14v8H9z" fill="#f1f2f5" stroke="#444" stroke-width="1.400"/></symbol>
<!-- status bar -->
<symbol id="s1" viewBox="0 0 24 24"><path d="M4 1v22M9 1v22M14 1v22M19 1v22M1 5h21M1 10h21M1 15h21M1 20h21" stroke="#2b95ff" stroke-width="1.700" filter="url(#glow)"/></symbol>
<symbol id="s2" viewBox="0 0 24 24"><path d="M2 2v22M6 2v22M10 2v22M14 2v22M18 2v22M22 2v22" stroke="#b8b8b8" stroke-width="1.600" stroke-dasharray="1.600 2.600"/></symbol>
<symbol id="s3" viewBox="0 0 24 24"><path d="M11 16V2h6v7h-6" fill="none" stroke="#bbb" stroke-width="1.800"/><path d="M5 15h8v8H5z" fill="#bbb"/></symbol>
<symbol id="s4" viewBox="0 0 24 24"><g filter="url(#glow)"><path d="M6 2v12M0 8h12" stroke="#2b95ff" stroke-width="1.800"/><rect x="9" y="15" width="15" height="7" rx="3" fill="#2b95ff"/></g></symbol>
<symbol id="s5" viewBox="0 0 24 24"><path d="M3 1v20h20M3 14h6v7" fill="none" stroke="#2b95ff" stroke-width="1.800" filter="url(#glow)"/></symbol>
<symbol id="s6" viewBox="0 0 24 24"><path d="M20 8a10 10 0 1 0 1 7M12 13h12M12 13l8-8" fill="none" stroke="#bbb" stroke-width="1.700"/></symbol>
<symbol id="s7" viewBox="0 0 24 24"><path d="M12 0v24M0 0l24 24" stroke="#aaa" stroke-width="1.600"/></symbol>
<symbol id="s8" viewBox="0 0 24 24"><path d="M20 2L2 22h22" fill="none" stroke="#2b95ff" stroke-width="2" filter="url(#glow)"/><circle cx="11" cy="12" r="2.500" fill="#2b95ff"/></symbol>
<symbol id="s9" viewBox="0 0 24 24"><path d="M2 3h21v19H2z" fill="none" stroke="#2b95ff" stroke-width="2" filter="url(#glow)"/><path d="M1 1h6v6H1z" fill="#0bd50b" stroke="#021" stroke-width="2"/></symbol>
<symbol id="s10" viewBox="0 0 24 24"><path d="M0 3h24" stroke="#c8c8c8" stroke-width="2"/><path d="M0 11h13M0 19.500h13" stroke="#c8c8c8" stroke-width="5"/><path d="M13 9.500h11M13 20h11" stroke="#c8c8c8" stroke-width="2"/></symbol>
<pattern id="chk" width="6" height="6" patternUnits="userSpaceOnUse"><path d="M0 0h3v3H0zM3 3h3v3H3z" fill="#ccc"/></pattern>
<symbol id="s11" viewBox="0 0 24 24"><path d="M2 2h20v20H2z" fill="url(#chk)" stroke="#ccc" stroke-width="1.500"/></symbol>
<symbol id="s12" viewBox="0 0 24 24"><path d="M4 1v8M0 5h8M8 16V8h10" stroke="#c8c8c8" stroke-width="1.600" fill="none"/><path d="M10 11h12v12H10z" fill="#8fbf6f" stroke="#b8d8a4"/></symbol>
<symbol id="s13" viewBox="0 0 24 24"><path d="M2 8l11-5 9 5v10l-9 5-10-5zM12 23V12l10-4M12 12L6 9" fill="none" stroke="#c8c8c8" stroke-width="1.800"/><path d="M1 1h6v6H1z" fill="#0bd50b" stroke="#021" stroke-width="2"/></symbol>
<symbol id="s14" viewBox="0 0 24 24"><path d="M3 1v21h21M3 22L14 9M0 5l3-4 3 4M20 19l4 3-4 2" fill="none" stroke="#2b95ff" stroke-width="1.800" filter="url(#glow)"/><path d="M20 1l-8 8h4l-2 6 9-8h-4l3-6z" fill="#2b95ff"/></symbol>
<symbol id="s15" viewBox="0 0 24 24"><path d="M2 7l10-5 10 5v11l-10 5-10-5zM2 7l10 5 10-5M12 12v11" fill="none" stroke="#aaa" stroke-width="1.500"/></symbol>
<symbol id="s16" viewBox="0 0 24 24"><path d="M12 2l9 5v10l-9 6-9-6V7z" fill="none" stroke="#999" stroke-width="1.500"/><path d="M12 2v10" stroke="#3f84e0" stroke-width="1.800"/><path d="M12 12l-9 6" stroke="#3d9a26" stroke-width="1.800"/><path d="M12 12l9 6" stroke="#d93a1f" stroke-width="1.800"/><circle cx="12" cy="12.500" r="2" fill="#444" stroke="#bbb"/><circle cx="3" cy="18" r="2" fill="#444" stroke="#3d9a26"/><circle cx="21" cy="18" r="2" fill="#444" stroke="#d93a1f"/><circle cx="12" cy="2.500" r="2" fill="#444" stroke="#3f84e0"/></symbol>
<symbol id="s17" viewBox="0 0 24 24"><path d="M11 0l3 7v6l10 11c-4 0-9-1-12-5-3 4-8 5-12 5l9-11V7z" fill="#c4c4c4"/></symbol>
<symbol id="s18" viewBox="0 0 24 24"><use href="#s17"/><circle cx="17" cy="6" r="4" fill="#555" stroke="#c8c8c8" stroke-width="1.800"/></symbol>
<symbol id="s19" viewBox="0 0 24 24"><use href="#s17"/><path d="M19 0l-6 7h4l-3 6 9-8h-4l3-5z" fill="#c8c8c8"/></symbol>
<symbol id="s20" viewBox="0 0 24 24"><circle cx="12" cy="12" r="5.500" fill="none" stroke="#c8c8c8" stroke-width="5"/><path d="M12 1v4M12 19v4M1 12h4M19 12h4M4 4l3 3M17 17l3 3M20 4l-3 3M7 17l-3 3" stroke="#c8c8c8" stroke-width="4"/></symbol>
<symbol id="s21" viewBox="0 0 24 24"><path d="M12 1v22M1 12h22" stroke="#c8c8c8" stroke-width="2.400"/></symbol>
<symbol id="s22" viewBox="0 0 24 24"><path d="M8 1h8v22H8z" fill="#ccc"/><path d="M16 4h-3m3 4h-4m4 4h-3m3 4h-4m4 4h-3" stroke="#555" stroke-width="1.400"/></symbol>
<symbol id="s23" viewBox="0 0 24 24"><path d="M6 4h12v16H6z" fill="none" stroke="#c8c8c8" stroke-width="1.600"/><path d="M8 8h2m1 0h5m-8 4h2m1 0h5m-8 4h2m1 0h5" stroke="#c8c8c8" stroke-width="2"/></symbol>
<symbol id="s24" viewBox="0 0 24 24"><path d="M9 20H1V1h19v7" fill="none" stroke="#c8c8c8" stroke-width="1.600"/><path d="M1 2h19" stroke="#c8c8c8" stroke-width="3"/><path d="M16 15v-3c0-4 7-4 7 0v3" fill="none" stroke="#c8c8c8" stroke-width="1.800"/><path d="M10 15h10v8H10z" fill="#c8c8c8"/><path d="M15 17v4" stroke="#444" stroke-width="1.500"/></symbol>
<symbol id="s25" viewBox="0 0 24 24"><path d="M2 1h9v10H2zM5.500 22l5-8 5 8z" fill="none" stroke="#b8b8b8" stroke-width="1.600"/><circle cx="18.500" cy="11" r="4.500" fill="none" stroke="#b8b8b8" stroke-width="1.600"/></symbol>
<symbol id="s26" viewBox="0 0 24 24"><circle cx="12" cy="12" r="11" fill="#0058b0" stroke="#1887ff" stroke-width="1.500" filter="url(#glow)"/><path d="M9 16h3l5-5" stroke="#1887ff" stroke-width="2.200" fill="none"/></symbol>
<symbol id="s27" viewBox="0 0 24 24"><path d="M1 3h22v18H1z" fill="none" stroke="#c8c8c8" stroke-width="1.800"/><path d="M13 11l6-5m-5 0h6v5M11 13l-6 5m0-5v6h6" fill="none" stroke="#ddd" stroke-width="2"/></symbol>
<symbol id="s28" viewBox="0 0 24 24"><path d="M1 4h22M1 12h22M1 20h22" stroke="#c8c8c8" stroke-width="2.500"/></symbol>
<symbol id="tri" viewBox="0 0 10 10"><path d="M0 2h10L5 8z" fill="currentColor"/></symbol>
<symbol id="chev" viewBox="0 0 12 12"><path d="M1 3l5 5 5-5" fill="none" stroke="currentColor" stroke-width="1.200"/></symbol>
<symbol id="plus" viewBox="0 0 12 12"><path d="M6 0v12M0 6h12" stroke="currentColor" stroke-width="3"/></symbol>
</svg>

<!-- Application button -->
<button aria-label="应用程序菜单" class="absolute left-0 top-0 z-10 flex h-[59px] w-[60px] items-start justify-between border-r-2 border-b-2 border-black bg-linear-to-b from-[#c4c4c4] to-[#6c6c6c] pr-1 pl-1">
  <svg class="h-[41px] w-9" viewBox="0 0 36 40"><path d="M0 39L13 1h10l12 38h-9l-4-11H11L8 39zM13 22h8l-4-12z" fill="url(#r)" fill-rule="evenodd"/><path d="M13 1h10l3 9-7-4-4 17-6 6z" fill="#e8464a"/><path d="M8 39l3-11c6 0 12-3 15-6l9 17h-9l-4-11c-3 3-7 4-11 4z" fill="#8d0d12"/><path d="M0 39l2-7h8l-2 7zM26 39l-2-7h9l2 7z" fill="#ee7a75" opacity=".7"/></svg>
  <svg class="mt-[22px] size-[10px] text-[#2c323a]"><use href="#tri"/></svg>
</button>

<!-- Title bar -->
<header class="flex h-[34px] shrink-0 bg-white text-black">
  <div class="flex w-[381px] shrink-0 items-center bg-linear-to-b from-[#9a9a9a] to-[#858585] pl-[67px] text-white [&>*]:shrink-0 [&>button]:flex [&>button]:h-8 [&>button]:w-9 [&>button]:items-center [&>button]:justify-center [&>button>svg]:size-6">
    <button aria-label="新建"><svg><use href="#new"/></svg></button>
    <button aria-label="打开"><svg><use href="#open"/></svg></button>
    <button aria-label="保存"><svg><use href="#save"/></svg></button>
    <button aria-label="另存为"><svg><use href="#saveas"/></svg></button>
    <button aria-label="打印"><svg><use href="#print"/></svg></button>
    <button aria-label="放弃"><svg><use href="#undo"/></svg></button>
    <div class="flex w-4 justify-center"><svg class="size-2"><use href="#tri"/></svg></div>
    <button aria-label="重做" class="opacity-35"><svg><use href="#redo"/></svg></button>
    <div class="flex w-4 justify-center text-[#d0d0d0]"><svg class="size-2"><use href="#tri"/></svg></div>
    <button aria-label="自定义快速访问工具栏" class="-ml-[2px]"><svg viewBox="0 0 24 24"><path d="M6 6h12v2H6zM6 11h12l-6 7z" fill="#fff"/></svg></button>
  </div>
  <h1 class="flex flex-1 items-center gap-5 pb-[2px] pl-[466px]"><span>Autodesk AutoCAD 2018</span><span class="pl-3">Drawing1.dwg</span></h1>
  <div class="flex items-center text-[#8a8a8a] [&>button]:flex [&>button]:w-[70px] [&>button]:justify-center [&_svg]:size-4">
    <button aria-label="最小化"><svg viewBox="0 0 16 16"><path d="M0 8.500h16" stroke="currentColor"/></svg></button>
    <button aria-label="还原"><svg viewBox="0 0 16 16"><path d="M.5 3.500h11v12H.5zM3.500 3V.5h12v12H12" fill="none" stroke="currentColor"/></svg></button>
    <button aria-label="关闭"><svg viewBox="0 0 16 16"><path d="M0 0l16 16M16 0L0 16" stroke="currentColor"/></svg></button>
  </div>
</header>

<!-- Menu bar -->
<nav class="flex h-[31px] shrink-0 items-center border-t border-[#222] bg-linear-to-b from-[#b0b0b0] to-[#505050] pb-[2px] pl-[76px]">
  <div class="flex flex-1 gap-8 leading-6">
    <button>文件(F)</button><button>编辑(E)</button><button>视图(V)</button><button>插入(I)</button><button>格式(O)</button><button>工具(T)</button><button>绘图(D)</button><button>标注(N)</button><button>修改(M)</button><button>参数(P)</button><button>窗口(W)</button><button>帮助(H)</button>
  </div>
  <div class="flex items-center gap-1 [&_svg]:h-5 [&_svg]:w-[21px]">
    <button aria-label="最小化图形"><svg viewBox="0 0 20 20"><path d="M2 13.500h15" stroke="#222" stroke-width="3"/></svg></button>
    <button aria-label="还原图形"><svg viewBox="0 0 20 20"><path d="M7 6V3h11v9h-4M2 8h11v9H2z" fill="none" stroke="#222" stroke-width="2"/><path d="M1 8h13M6 3h13" stroke="#222" stroke-width="3"/></svg></button>
    <button aria-label="关闭图形"><svg viewBox="0 0 20 20"><path d="M4 4l11 12M15 4L4 16" stroke="#222" stroke-width="3.500"/></svg></button>
  </div>
</nav>

<!-- File tabs -->
<div class="flex h-[37px] shrink-0 items-end bg-[#383838]">
  <div class="relative ml-3 flex h-8 w-[202px] items-center pl-[34px] text-[#b4b4b4]">
    <svg class="absolute inset-0 h-full w-full" viewBox="0 0 202 32" preserveAspectRatio="none"><path d="M0 32C14 32 16 26 20 12S26 .5 33 .5H190c8 0 10 4 12 10V32z" fill="url(#t)" stroke="#6a6a6a"/></svg>
    <button class="relative">开始</button>
  </div>
  <div class="relative -ml-1 flex h-8 w-[200px] items-center pl-[22px]">
    <svg class="absolute inset-0 h-full w-full" viewBox="0 0 200 32" preserveAspectRatio="none"><path d="M-4 32C4 32 4 24 7 12S12 .5 20 .5H174c10 0 11 6 14 16s5 15 12 15.500z" fill="url(#ta)" stroke="#777"/></svg>
    <button class="relative flex-1 text-left">Drawing1*</button>
    <button class="relative mr-[29px]" aria-label="关闭标签"><svg class="size-3" viewBox="0 0 12 12"><path d="M1 1l10 10M11 1L1 11" stroke="#4a4a4a" stroke-width="2.500"/></svg></button>
  </div>
  <button aria-label="新图形" class="mb-1 flex h-[23px] w-[33px] items-center justify-center rounded-tr-2xl rounded-br rounded-bl-2xl border border-[#5c5c5c] bg-[#4a4a4a] text-[#b8b8b8]"><svg class="size-3"><use href="#plus"/></svg></button>
</div>

<!-- Toolbars -->
<section class="flex shrink-0 flex-col gap-[3px] overflow-hidden border-t border-[#6a6a6a] pt-[5px] pb-1
  [&_button]:flex [&_button]:w-[35px] [&_button]:shrink-0 [&_button]:items-center [&_button]:justify-center [&_button]:pb-[2px] [&_button>svg]:size-6
  [&_hr]:mx-[2px] [&_hr]:h-[30px] [&_hr]:w-[2px] [&_hr]:shrink-0 [&_hr]:border-0 [&_hr]:border-l [&_hr]:border-[#999] [&_hr]:bg-[#333]
  [&_label]:flex [&_label]:h-[31px] [&_label]:shrink-0 [&_label]:items-center [&_label]:bg-[#e1e1e1] [&_label]:pr-[6px] [&_label]:pl-[9px] [&_label]:text-[#222] [&_label>svg:last-child]:size-3
  [&_select]:min-w-0 [&_select]:flex-1 [&_select]:appearance-none [&_select]:bg-transparent [&_select]:font-['Liberation_Mono',monospace] [&_select]:text-[15px] [&_select]:text-black
  [&_i]:h-7 [&_i]:w-2 [&_i]:shrink-0 [&_i]:mx-px">
  <div class="flex h-[37px] gap-[2px] [&>div]:flex [&>div]:shrink-0 [&>div]:items-center [&>div]:border-2 [&>div]:border-[#383838] [&>div]:bg-[#626262]">
    <div class="-ml-px">
      <i><svg class="h-full w-full"><rect width="8" height="28" fill="url(#dots)"/></svg></i>
      <button aria-label="新建"><svg><use href="#new"/></svg></button><button aria-label="打开"><svg><use href="#open"/></svg></button><button aria-label="保存"><svg><use href="#save"/></svg></button>
      <hr>
      <button aria-label="打印"><svg><use href="#print"/></svg></button><button aria-label="打印预览"><svg><use href="#preview"/></svg></button><button aria-label="发布"><svg><use href="#publish"/></svg></button><button aria-label="三维打印"><svg><use href="#p3d"/></svg></button>
      <hr>
      <button aria-label="剪切"><svg><use href="#cut"/></svg></button><button aria-label="复制"><svg><use href="#copy"/></svg></button><button aria-label="粘贴"><svg><use href="#paste"/></svg></button><button aria-label="特性匹配"><svg><use href="#match"/></svg></button><button aria-label="块编辑器"><svg><use href="#block"/></svg></button>
      <hr>
      <button aria-label="放弃"><svg><use href="#undo"/></svg></button><svg class="mx-[6px] size-[7px] text-[#333]"><use href="#tri"/></svg><button aria-label="重做"><svg><use href="#redo"/></svg></button><svg class="mx-[6px] size-[7px] text-[#aaa]"><use href="#tri"/></svg>
      <hr>
      <button aria-label="实时平移"><svg><use href="#pan"/></svg></button><button aria-label="实时缩放"><svg><use href="#zoomt"/></svg></button><button aria-label="窗口缩放"><svg><use href="#zoomw"/></svg></button><button aria-label="缩放上一个"><svg><use href="#zoomp"/></svg></button>
      <hr>
      <button aria-label="特性"><svg><use href="#props"/></svg></button><button aria-label="设计中心"><svg><use href="#dc"/></svg></button><button aria-label="工具选项板"><svg><use href="#tp"/></svg></button><button aria-label="图纸集管理器"><svg><use href="#ssm"/></svg></button><button aria-label="标记集管理器"><svg><use href="#markup"/></svg></button><button aria-label="快速计算器"><svg><use href="#calc"/></svg></button>
      <hr>
      <button aria-label="帮助"><svg><use href="#help"/></svg></button>
    </div>
    <div>
      <i class="ml-[5px]"><svg class="h-full w-full"><rect width="8" height="28" fill="url(#dots)"/></svg></i>
      <button aria-label="文字样式"><svg><use href="#tstyle"/></svg></button>
      <label class="w-[180px]"><select aria-label="文字样式控制"><option></option></select><svg><use href="#chev"/></svg></label>
      <hr><button aria-label="标注样式"><svg><use href="#dstyle"/></svg></button>
      <label class="w-[180px]"><select aria-label="标注样式控制"><option></option></select><svg><use href="#chev"/></svg></label>
      <hr><button aria-label="表格样式"><svg><use href="#tbstyle"/></svg></button>
      <label class="w-[180px]"><select aria-label="表格样式控制"><option></option></select><svg><use href="#chev"/></svg></label>
      <hr><button aria-label="多重引线样式"><svg><use href="#mlstyle"/></svg></button>
      <label class="w-[178px]"><select aria-label="多重引线样式控制"><option></option></select><svg><use href="#chev"/></svg></label>
    </div>
    <div>
      <i class="ml-[3px]"><svg class="h-full w-full"><rect width="8" height="28" fill="url(#dots)"/></svg></i>
      <button aria-label="视口"><svg><use href="#vp"/></svg></button><button aria-label="新建视口"><svg><use href="#vp"/></svg></button>
    </div>
  </div>
  <div class="flex h-[37px] [&>div]:flex [&>div]:shrink-0 [&>div]:items-center [&>div]:border-2 [&>div]:border-[#383838] [&>div]:bg-[#626262]">
    <div class="-ml-px">
      <i><svg class="h-full w-full"><rect width="8" height="28" fill="url(#dots)"/></svg></i>
      <label class="w-[226px] gap-[6px]"><svg class="size-4 shrink-0" viewBox="0 0 16 16"><path d="M1.500 1.500h13v13h-13z" fill="#fff" stroke="#000" stroke-width="2"/></svg><select aria-label="颜色控制"><option>ByLayer</option></select><svg><use href="#chev"/></svg></label>
      <hr>
      <label class="w-[239px] gap-[7px]"><svg class="h-4 w-[90px] shrink-0"><path d="M0 8.500h90" stroke="#000"/></svg><select aria-label="线型控制"><option>ByLayer</option></select><svg><use href="#chev"/></svg></label>
      <hr>
      <label class="w-[189px] gap-2"><svg class="h-4 w-[52px] shrink-0"><path d="M0 8h52" stroke="#000" stroke-width="2"/></svg><select aria-label="线宽控制"><option>ByLayer</option></select><svg><use href="#chev"/></svg></label>
      <hr>
      <label class="w-[179px] opacity-80 [&>svg]:opacity-40"><span class="w-[6px]"></span><select disabled aria-label="打印样式控制" class="opacity-60"><option>ByColor</option></select><svg><use href="#chev"/></svg></label>
    </div>
    <div>
      <i class="mr-[3px] ml-[3px]"><svg class="h-full w-full"><rect width="8" height="28" fill="url(#dots)"/></svg></i>
      <button aria-label="图层特性管理器"><svg><use href="#lprop"/></svg></button>
      <label class="w-[450px] gap-[2px] !pl-[3px] [&>svg:nth-child(-n+4)]:mb-1"><svg class="size-6 shrink-0"><use href="#bulb"/></svg><svg class="size-6 shrink-0"><use href="#sun"/></svg><svg class="size-6 shrink-0"><use href="#frz"/></svg><svg class="size-6 shrink-0"><use href="#lock"/></svg><svg class="size-4 shrink-0" viewBox="0 0 16 16"><path d="M1.500 1.500h13v13h-13z" fill="#fff" stroke="#000" stroke-width="2"/></svg><select aria-label="图层控制" class="ml-1 !font-['Noto_Sans',sans-serif] !text-lg"><option>0</option></select><svg><use href="#chev"/></svg></label>
      <button aria-label="将对象的图层置为当前"><svg><use href="#lcur"/></svg></button><button aria-label="上一个图层"><svg><use href="#lprev"/></svg></button><button aria-label="图层状态管理器"><svg><use href="#lstate"/></svg></button>
    </div>
    <div class="ml-[7px]">
      <i class="ml-[3px]"><svg class="h-full w-full"><rect width="8" height="28" fill="url(#dots)"/></svg></i>
      <button aria-label="多行文字"><svg><use href="#A"/></svg></button><button aria-label="单行文字"><svg><use href="#txt1"/></svg></button><button aria-label="编辑文字"><svg><use href="#txt2"/></svg></button><button aria-label="查找"><svg><use href="#find"/></svg></button><button aria-label="拼写检查"><svg><use href="#spell"/></svg></button><button aria-label="文字样式"><svg><use href="#tstyle"/></svg></button><button aria-label="缩放文字"><svg><use href="#tscale"/></svg></button><button aria-label="对正文字"><svg><use href="#tjust"/></svg></button><button aria-label="空间转换"><svg><use href="#tspace"/></svg></button>
    </div>
  </div>
  <div class="flex h-[37px] gap-[6px] [&>div]:flex [&>div]:shrink-0 [&>div]:items-center [&>div]:border-2 [&>div]:border-[#383838] [&>div]:bg-[#626262]">
    <div class="-ml-px">
      <i><svg class="h-full w-full"><rect width="8" height="28" fill="url(#dots)"/></svg></i>
      <button aria-label="线性"><svg><use href="#d1"/></svg></button><button aria-label="对齐"><svg><use href="#d2"/></svg></button><button aria-label="弧长"><svg><use href="#d3"/></svg></button><button aria-label="坐标"><svg><use href="#d4"/></svg></button>
      <hr>
      <button aria-label="半径"><svg><use href="#d5"/></svg></button><button aria-label="折弯"><svg><use href="#d6"/></svg></button><button aria-label="直径"><svg><use href="#d7"/></svg></button><button aria-label="角度"><svg><use href="#d8"/></svg></button>
      <hr>
      <button aria-label="快速标注"><svg><use href="#d9"/></svg></button><button aria-label="基线"><svg><use href="#d10"/></svg></button><button aria-label="连续"><svg><use href="#d11"/></svg></button><button aria-label="等距标注"><svg><use href="#d12"/></svg></button><button aria-label="折断标注"><svg><use href="#d13"/></svg></button>
      <hr>
      <button aria-label="公差"><svg><use href="#d14"/></svg></button><button aria-label="圆心标记"><svg><use href="#d15"/></svg></button><button aria-label="检验"><svg><use href="#d16"/></svg></button><button aria-label="折弯线性"><svg><use href="#d17"/></svg></button>
      <hr>
      <button aria-label="编辑标注"><svg><use href="#d18"/></svg></button><button aria-label="编辑标注文字"><svg><use href="#d19"/></svg></button><button aria-label="标注更新"><svg><use href="#d20"/></svg></button>
      <hr>
      <label class="w-[180px]"><select aria-label="标注样式"><option></option></select><svg><use href="#chev"/></svg></label>
      <button aria-label="标注样式管理器"><svg><use href="#dstyle"/></svg></button>
    </div>
    <div>
      <i class="ml-[3px]"><svg class="h-full w-full"><rect width="8" height="28" fill="url(#dots)"/></svg></i>
      <button aria-label="距离"><svg><use href="#m1"/></svg></button><button aria-label="面域特性"><svg><use href="#m2"/></svg></button>
      <hr>
      <button aria-label="列表"><svg><use href="#m3"/></svg></button><button aria-label="定位点"><svg><use href="#m4"/></svg></button>
    </div>
  </div>
</section>

<!-- Workspace -->
<main class="flex min-h-0 flex-1 gap-1 pb-[3px]">
  <aside aria-label="绘图" class="flex w-[37px] shrink-0 flex-col self-start border-t-2 border-r-2 border-b-2 border-[#383838] bg-[#626262] pr-[2px] [&>button]:flex [&>button]:h-[33px] [&>button]:items-center [&>button]:justify-center [&>button>svg]:size-6">
    <svg class="mt-[3px] ml-[6px] h-[8px] w-[28px]"><rect width="28" height="8" fill="url(#dots)"/></svg>
    <button aria-label="直线"><svg><use href="#w1"/></svg></button><button aria-label="构造线"><svg><use href="#w2"/></svg></button><button aria-label="多段线"><svg><use href="#w3"/></svg></button><button aria-label="多边形"><svg><use href="#w4"/></svg></button><button aria-label="矩形"><svg><use href="#w5"/></svg></button><button aria-label="圆弧"><svg><use href="#w6"/></svg></button><button aria-label="圆"><svg><use href="#w7"/></svg></button><button aria-label="修订云线"><svg><use href="#w8"/></svg></button><button aria-label="样条曲线"><svg><use href="#w9"/></svg></button><button aria-label="椭圆"><svg><use href="#w10"/></svg></button><button aria-label="椭圆弧"><svg><use href="#w11"/></svg></button><button aria-label="插入块"><svg><use href="#w12"/></svg></button><button aria-label="创建块"><svg><use href="#w13"/></svg></button><button aria-label="点"><svg><use href="#w14"/></svg></button><button aria-label="图案填充"><svg><use href="#w15"/></svg></button><button aria-label="渐变色"><svg><use href="#w16"/></svg></button><button aria-label="面域"><svg><use href="#w17"/></svg></button><button aria-label="表格"><svg><use href="#table"/></svg></button><button aria-label="多行文字"><svg><use href="#A"/></svg></button><button aria-label="添加选定对象"><svg><use href="#w18"/></svg></button>
  </aside>

  <div class="flex min-w-0 flex-1 flex-col">
    <div class="flex min-h-0 flex-1">
      <div class="relative min-w-0 flex-1 overflow-hidden bg-black">
        <svg class="absolute inset-0 h-full w-full" shape-rendering="crispEdges" fill="none">
          <path id="grid-minor" stroke="#17171c"/>
          <path id="grid-major" stroke="#262638"/>
          <path d="M703.500 154v352.500h351V154" stroke="#fff"/>
          <path d="M703 154.500h352" stroke="#173c84" stroke-width="5"/>
          <path d="M703 154.500h352" stroke="#fff"/>
          <g fill="#007fff" stroke="#555"><path d="M696.500 147.500h14v14h-14zM871.500 147.500h14v14h-14zM1047.500 147.500h14v14h-14z"/></g>
          <g stroke="#fff"><path d="M933.500 137v44m0 9v44M885 185.500h44m9 0h44"/><path d="M929.500 181.500h8v8h-8z"/></g>
          <g stroke="#fff"><path d="M19.500 570v74.500H95M13.500 637.500h13v13h-13z"/></g>
          <g stroke="#fff"><path d="M21 547l9.500 9.500 9.500-9.500M30.500 556v10M99 624l19 19M118 624l-19 19"/></g>
        </svg>
        <!-- View cube -->
        <div class="absolute top-[14px] right-3 flex w-[132px] flex-col items-center text-lg leading-6 text-[#999]">
          <svg class="absolute top-[7px] h-[112px] w-[112px]" viewBox="0 0 112 112"><circle cx="56" cy="56" r="50" fill="none" stroke="#2b2b2b" stroke-width="12"/></svg>
          <span class="relative">北</span>
          <div class="relative flex h-[80px] w-full items-center justify-between px-1">
            <span>西</span>
            <button class="flex size-12 items-center justify-center border border-[#8c8c8c] bg-[#a3a3a3] text-[#444]"><span class="flex size-[30px] items-center justify-center bg-[#94959b] text-[28px]">上</span></button>
            <span>东</span>
          </div>
          <span class="relative">南</span>
          <button class="relative mt-4 flex h-[26px] w-[70px] items-center justify-between rounded-md border-2 border-[#7c7c84] bg-[#8c8c95] pr-[5px] pl-1 font-['Liberation_Sans',sans-serif] text-[15px] text-[#333]">WCS<svg class="size-3 text-[#a2a2ac]"><use href="#tri"/></svg></button>
        </div>
      </div>
      <div class="flex w-[26px] shrink-0 flex-col items-center bg-[#f0f0f0] text-[#555]">
        <button aria-label="向上滚动" class="flex h-7 items-center"><svg class="size-3" viewBox="0 0 12 12"><path d="M1 9l5-5 5 5" fill="none" stroke="currentColor" stroke-width="2.500"/></svg></button>
        <div class="mt-auto h-[26px] w-6 bg-[#cdcdcd]"></div>
        <button aria-label="向下滚动" class="flex h-[26px] items-center"><svg class="size-3" viewBox="0 0 12 12"><path d="M1 3l5 5 5-5" fill="none" stroke="currentColor" stroke-width="2.500"/></svg></button>
      </div>
    </div>
    <div class="flex h-[26px] shrink-0 items-center border-t border-white bg-[#f0f0f0] text-[#555]">
      <button aria-label="向左滚动" class="flex w-[26px] justify-center"><svg class="size-3" viewBox="0 0 12 12"><path d="M9 1L4 6l5 5" fill="none" stroke="currentColor" stroke-width="2.500"/></svg></button>
      <div class="h-6 w-[26px] bg-[#cdcdcd]"></div>
      <button aria-label="向右滚动" class="mr-[33px] ml-auto"><svg class="size-3" viewBox="0 0 12 12"><path d="M3 1l5 5-5 5" fill="none" stroke="currentColor" stroke-width="2.500"/></svg></button>
    </div>
  </div>

  <div class="flex w-10 shrink-0 flex-col overflow-hidden [&_button]:flex [&_button]:h-[33px] [&_button]:items-center [&_button]:justify-center [&_button>svg]:size-6">
    <aside aria-label="修改" class="flex shrink-0 flex-col border-2 border-[#383838] bg-[#626262] pr-[2px]">
      <svg class="mt-[3px] ml-[6px] h-[8px] w-[28px]"><rect width="28" height="8" fill="url(#dots)"/></svg>
      <button aria-label="删除"><svg><use href="#e1"/></svg></button><button aria-label="复制"><svg><use href="#e2"/></svg></button><button aria-label="镜像"><svg><use href="#e3"/></svg></button><button aria-label="偏移"><svg><use href="#e4"/></svg></button><button aria-label="阵列"><svg><use href="#e5"/></svg></button><button aria-label="移动"><svg><use href="#e6"/></svg></button><button aria-label="旋转"><svg><use href="#e7"/></svg></button><button aria-label="缩放"><svg><use href="#e8"/></svg></button><button aria-label="拉伸"><svg><use href="#e9"/></svg></button><button aria-label="修剪"><svg><use href="#e10"/></svg></button><button aria-label="延伸"><svg><use href="#e11"/></svg></button><button aria-label="打断于点"><svg><use href="#e12"/></svg></button><button aria-label="打断"><svg><use href="#e13"/></svg></button><button aria-label="合并"><svg><use href="#e14"/></svg></button><button aria-label="倒角"><svg><use href="#e15"/></svg></button><button aria-label="圆角"><svg><use href="#e16"/></svg></button><button aria-label="光顺曲线"><svg><use href="#e17"/></svg></button><button aria-label="分解"><svg><use href="#e18"/></svg></button>
    </aside>
    <aside aria-label="绘图次序" class="flex min-h-0 flex-1 flex-col border-2 border-b-0 border-[#383838] bg-[#626262] pr-[2px]">
      <svg class="mt-[3px] ml-[6px] h-[8px] w-[28px] shrink-0"><rect width="28" height="8" fill="url(#dots)"/></svg>
      <button aria-label="前置"><svg><use href="#e19"/></svg></button><button aria-label="后置"><svg><use href="#e20"/></svg></button>
    </aside>
  </div>
</main>

<!-- Command window -->
<section class="flex h-[86px] shrink-0 border-t border-b-2 border-[#8a8a8a]">
  <div class="flex w-8 shrink-0 flex-col items-center bg-linear-to-b from-[#888] to-[#3c3c3c] pr-[2px]">
    <svg class="mt-[5px] h-1 w-7"><path d="M1 2h26" stroke="#bbb" stroke-width="2" stroke-dasharray="2 2"/></svg>
    <button aria-label="关闭命令行" class="mt-4"><svg class="size-[14px]" viewBox="0 0 14 14"><path d="M1 1l12 12M13 1L1 13" stroke="#fff" stroke-width="2.600"/></svg></button>
    <button aria-label="自定义" class="mt-4"><svg class="size-6" viewBox="0 0 24 24"><path d="M5 2l3 3-1 3-3 1-3-3c-1 5 3 8 7 7l11 10 4-4L13 8C14 3 9 0 5 2z" fill="#eee" stroke="#444"/></svg></button>
  </div>
  <div class="flex min-w-0 flex-1 flex-col">
    <div class="h-[52px] bg-[#c8c8c8] px-1 pt-[2px] font-['DejaVu_Sans_Mono','Noto_Sans_CJK_SC',monospace] leading-[22px] whitespace-pre text-black"><p><span class="text-xl leading-[22px]">区域</span> = 10000.0000, <span class="text-xl leading-[22px]">周长</span> = 400.0000</p><p><span class="text-xl leading-[22px]">命令</span>:</p></div>
    <div class="flex flex-1 items-center border-t border-[#777] bg-white pl-2">
      <button aria-label="近期使用的命令" class="flex items-center gap-[6px] text-[#777]"><svg class="size-[22px]" viewBox="0 0 22 22"><path d="M.5.500h21v21H.5z" fill="#d3d9e3" stroke="#9aa"/><path d="M5 5l5 5-5 5M11 16h7" stroke="#434a5c" stroke-width="2" fill="none"/></svg><svg class="size-[8px]"><use href="#tri"/></svg></button>
      <input aria-label="命令行" placeholder="键入命令" class="mb-[2px] ml-3 h-7 flex-1 bg-transparent text-xl text-black italic outline-none placeholder:text-[#999]">
    </div>
  </div>
</section>

<!-- Layout tabs -->
<div class="flex h-[30px] shrink-0 items-start bg-[#383838] leading-[29px] text-[#b4b4b4] [&>button]:relative [&>button]:h-7 [&_svg]:absolute [&_svg]:inset-0 [&_svg]:h-full [&_svg]:w-full [&_span]:relative">
  <button class="ml-4 w-[71px] font-bold text-white"><svg viewBox="0 0 71 28" preserveAspectRatio="none"><path d="M-6 0C8 2 4 27 12 27.500h46c9 0 5-26 13-27.500z" fill="url(#tb)" stroke="#777"/></svg><span>模型</span></button>
  <button class="w-[78px]"><svg viewBox="0 0 78 28" preserveAspectRatio="none"><path d="M0 0c4 4 2 27 9 27.500h56c9 0 5-26 13-27.500z" fill="url(#t)" stroke="#6a6a6a"/></svg><span>布局1</span></button>
  <button class="ml-1 w-[80px]"><svg viewBox="0 0 78 28" preserveAspectRatio="none"><path d="M0 0c4 4 2 27 9 27.500h56c9 0 5-26 13-27.500z" fill="url(#t)" stroke="#6a6a6a"/></svg><span>布局2</span></button>
  <button aria-label="新建布局" class="ml-[6px] flex w-[35px] items-center justify-center rounded-tl-2xl rounded-br-2xl border border-[#5c5c5c] bg-[#484848]"><span class="flex size-3"><svg><use href="#plus"/></svg></span></button>
</div>

<!-- Status bar -->
<footer class="flex h-[42px] shrink-0 items-stretch bg-[#383838]">
  <div class="ml-[98px] flex min-w-0 flex-1 justify-between gap-[2px] overflow-hidden border-t-2 border-[#5c5c5c] bg-[#5c5c5c] [&>div]:flex [&>div]:shrink-0 [&>div]:items-center [&>div]:border-2 [&>div]:border-b [&>div]:border-[#858585] [&>div]:bg-[#505050]
    [&_button]:flex [&_button]:h-full [&_button]:items-center [&_button]:justify-center [&_button>svg]:size-6 [&_button]:shrink-0">
    <div class="w-[275px] justify-end pr-[7px] text-[17px]">300.6980, 143.0835, 0.0000</div>
    <div class="w-[46px] justify-center text-[17px]"><button class="font-bold">模型</button></div>
    <div class="w-[98px]"><button class="w-9" aria-label="栅格"><svg><use href="#s1"/></svg></button><button class="w-[34px]" aria-label="捕捉"><svg><use href="#s2"/></svg></button><svg class="mx-auto size-[10px]"><use href="#tri"/></svg></div>
    <div class="w-[502px] [&>button]:border-r-2 [&>button]:border-[#7c7c7c] [&>span]:flex [&>span]:h-full [&>span]:items-center [&>span]:justify-around [&>span]:border-r-2 [&>span]:border-[#7c7c7c] [&>span:last-child]:border-r-0">
      <button class="w-[38px]" aria-label="推断约束"><svg><use href="#s3"/></svg></button>
      <button class="w-[38px]" aria-label="动态输入"><svg><use href="#s4"/></svg></button>
      <span class="w-[153px]"><button aria-label="正交"><svg><use href="#s5"/></svg></button><button aria-label="极轴追踪"><svg><use href="#s6"/></svg></button><svg class="size-[10px]"><use href="#tri"/></svg><button aria-label="等轴测草图"><svg><use href="#s7"/></svg></button><svg class="size-[10px]"><use href="#tri"/></svg></span>
      <span class="w-[96px]"><button aria-label="对象捕捉追踪"><svg><use href="#s8"/></svg></button><button aria-label="对象捕捉"><svg><use href="#s9"/></svg></button><svg class="size-[10px]"><use href="#tri"/></svg></span>
      <button class="w-[38px]" aria-label="线宽"><svg><use href="#s10"/></svg></button>
      <button class="w-[38px]" aria-label="透明度"><svg><use href="#s11"/></svg></button>
      <button class="w-[38px]" aria-label="选择循环"><svg><use href="#s12"/></svg></button>
      <span class="flex-1"><button aria-label="三维对象捕捉"><svg><use href="#s13"/></svg></button><svg class="size-[10px]"><use href="#tri"/></svg></span>
    </div>
    <div class="w-[156px] justify-around"><button aria-label="动态 UCS"><svg><use href="#s14"/></svg></button><button aria-label="选择过滤"><svg><use href="#s15"/></svg></button><svg class="size-[10px]"><use href="#tri"/></svg><button aria-label="小控件"><svg><use href="#s16"/></svg></button><svg class="size-[10px]"><use href="#tri"/></svg></div>
    <div class="w-[217px]"><button class="w-9" aria-label="注释可见性"><svg><use href="#s18"/></svg></button><button class="w-9" aria-label="自动缩放"><svg><use href="#s19"/></svg></button><button class="w-9" aria-label="注释比例"><svg><use href="#s17"/></svg></button><button class="ml-[5px] text-base">1:1 / 100%</button><svg class="mx-auto size-[10px]"><use href="#tri"/></svg></div>
    <div class="w-[100px]"><span class="flex h-full flex-1 items-center justify-around border-r-2 border-[#7c7c7c]"><button aria-label="切换工作空间"><svg class="!size-5"><use href="#s20"/></svg></button><svg class="size-[10px]"><use href="#tri"/></svg></span><button class="w-9" aria-label="注释监视器"><svg><use href="#s21"/></svg></button></div>
    <div class="w-[187px] text-[17px]"><span class="flex h-full flex-1 items-center border-r-2 border-[#7c7c7c] pl-[7px]"><button aria-label="单位图标"><svg><use href="#s22"/></svg></button><button class="ml-[14px]">小数</button><svg class="mr-[6px] ml-auto size-[10px]"><use href="#tri"/></svg></span><button class="w-9" aria-label="快捷特性"><svg><use href="#s23"/></svg></button></div>
    <div class="w-[100px]"><span class="flex h-full flex-1 items-center justify-around border-r-2 border-[#7c7c7c]"><button aria-label="锁定用户界面"><svg><use href="#s24"/></svg></button><svg class="size-[10px]"><use href="#tri"/></svg></span><button class="w-9" aria-label="隔离对象"><svg><use href="#s25"/></svg></button></div>
    <div class="w-10"><button class="w-9" aria-label="硬件加速"><svg><use href="#s26"/></svg></button></div>
    <div class="w-[6px]"></div>
    <div class="w-[73px] !border-r-0"><button class="w-9" aria-label="全屏显示"><svg><use href="#s27"/></svg></button><button class="w-9" aria-label="自定义"><svg><use href="#s28"/></svg></button></div>
  </div>
</footer>

<!-- Watermark -->
<svg class="pointer-events-none absolute right-[98px] bottom-[36px] h-[172px] w-[352px] drop-shadow-[0_0_2px_rgba(0,0,0,0.3)]" viewBox="0 0 352 172" fill="#fff" opacity=".72">
  <ellipse cx="135" cy="45" rx="13" ry="17"/><ellipse cx="159" cy="22" rx="12" ry="17"/><ellipse cx="190" cy="24" rx="13" ry="17"/><ellipse cx="209" cy="53" rx="13" ry="17"/>
  <path d="M171 49c16 0 17 14 29 26 14 13 18 20 12 31-7 11-23 5-41 5s-30 6-38-5c-7-11-2-20 8-31 12-12 14-26 30-26z"/>
  <text x="2" y="111" font-family="Liberation Sans, sans-serif" font-weight="700" font-size="78">Bai</text>
  <text x="142" y="103" font-family="Liberation Sans, sans-serif" font-weight="700" font-size="50" fill="#a8a8a8">du</text>
  <text x="225" y="106" font-family="Noto Sans CJK SC, sans-serif" font-weight="900" font-size="58">经验</text>
  <text x="6" y="157" font-family="Noto Sans, sans-serif" font-size="39">jingyan.baidu.com</text>
</svg>

<script>
  // Grid lines every 35.15 px, with a major line every fifth one.
  const step = 35.15, minor = [], major = [];
  for (let i = -1; i < 110; i++) {
    const x = Math.floor(52.3 + i * step) + 0.5;
    (i % 5 === 0 ? major : minor).push(`M${x} 0V3000`);
  }
  for (let i = -4; i < 80; i++) {
    const y = Math.floor(161.3 + i * step) + 0.5;
    (i % 5 === 0 ? major : minor).push(`M0 ${y}H4000`);
  }
  document.getElementById('grid-minor').setAttribute('d', minor.join(''));
  document.getElementById('grid-major').setAttribute('d', major.join(''));
</script>
</body>
</html>
